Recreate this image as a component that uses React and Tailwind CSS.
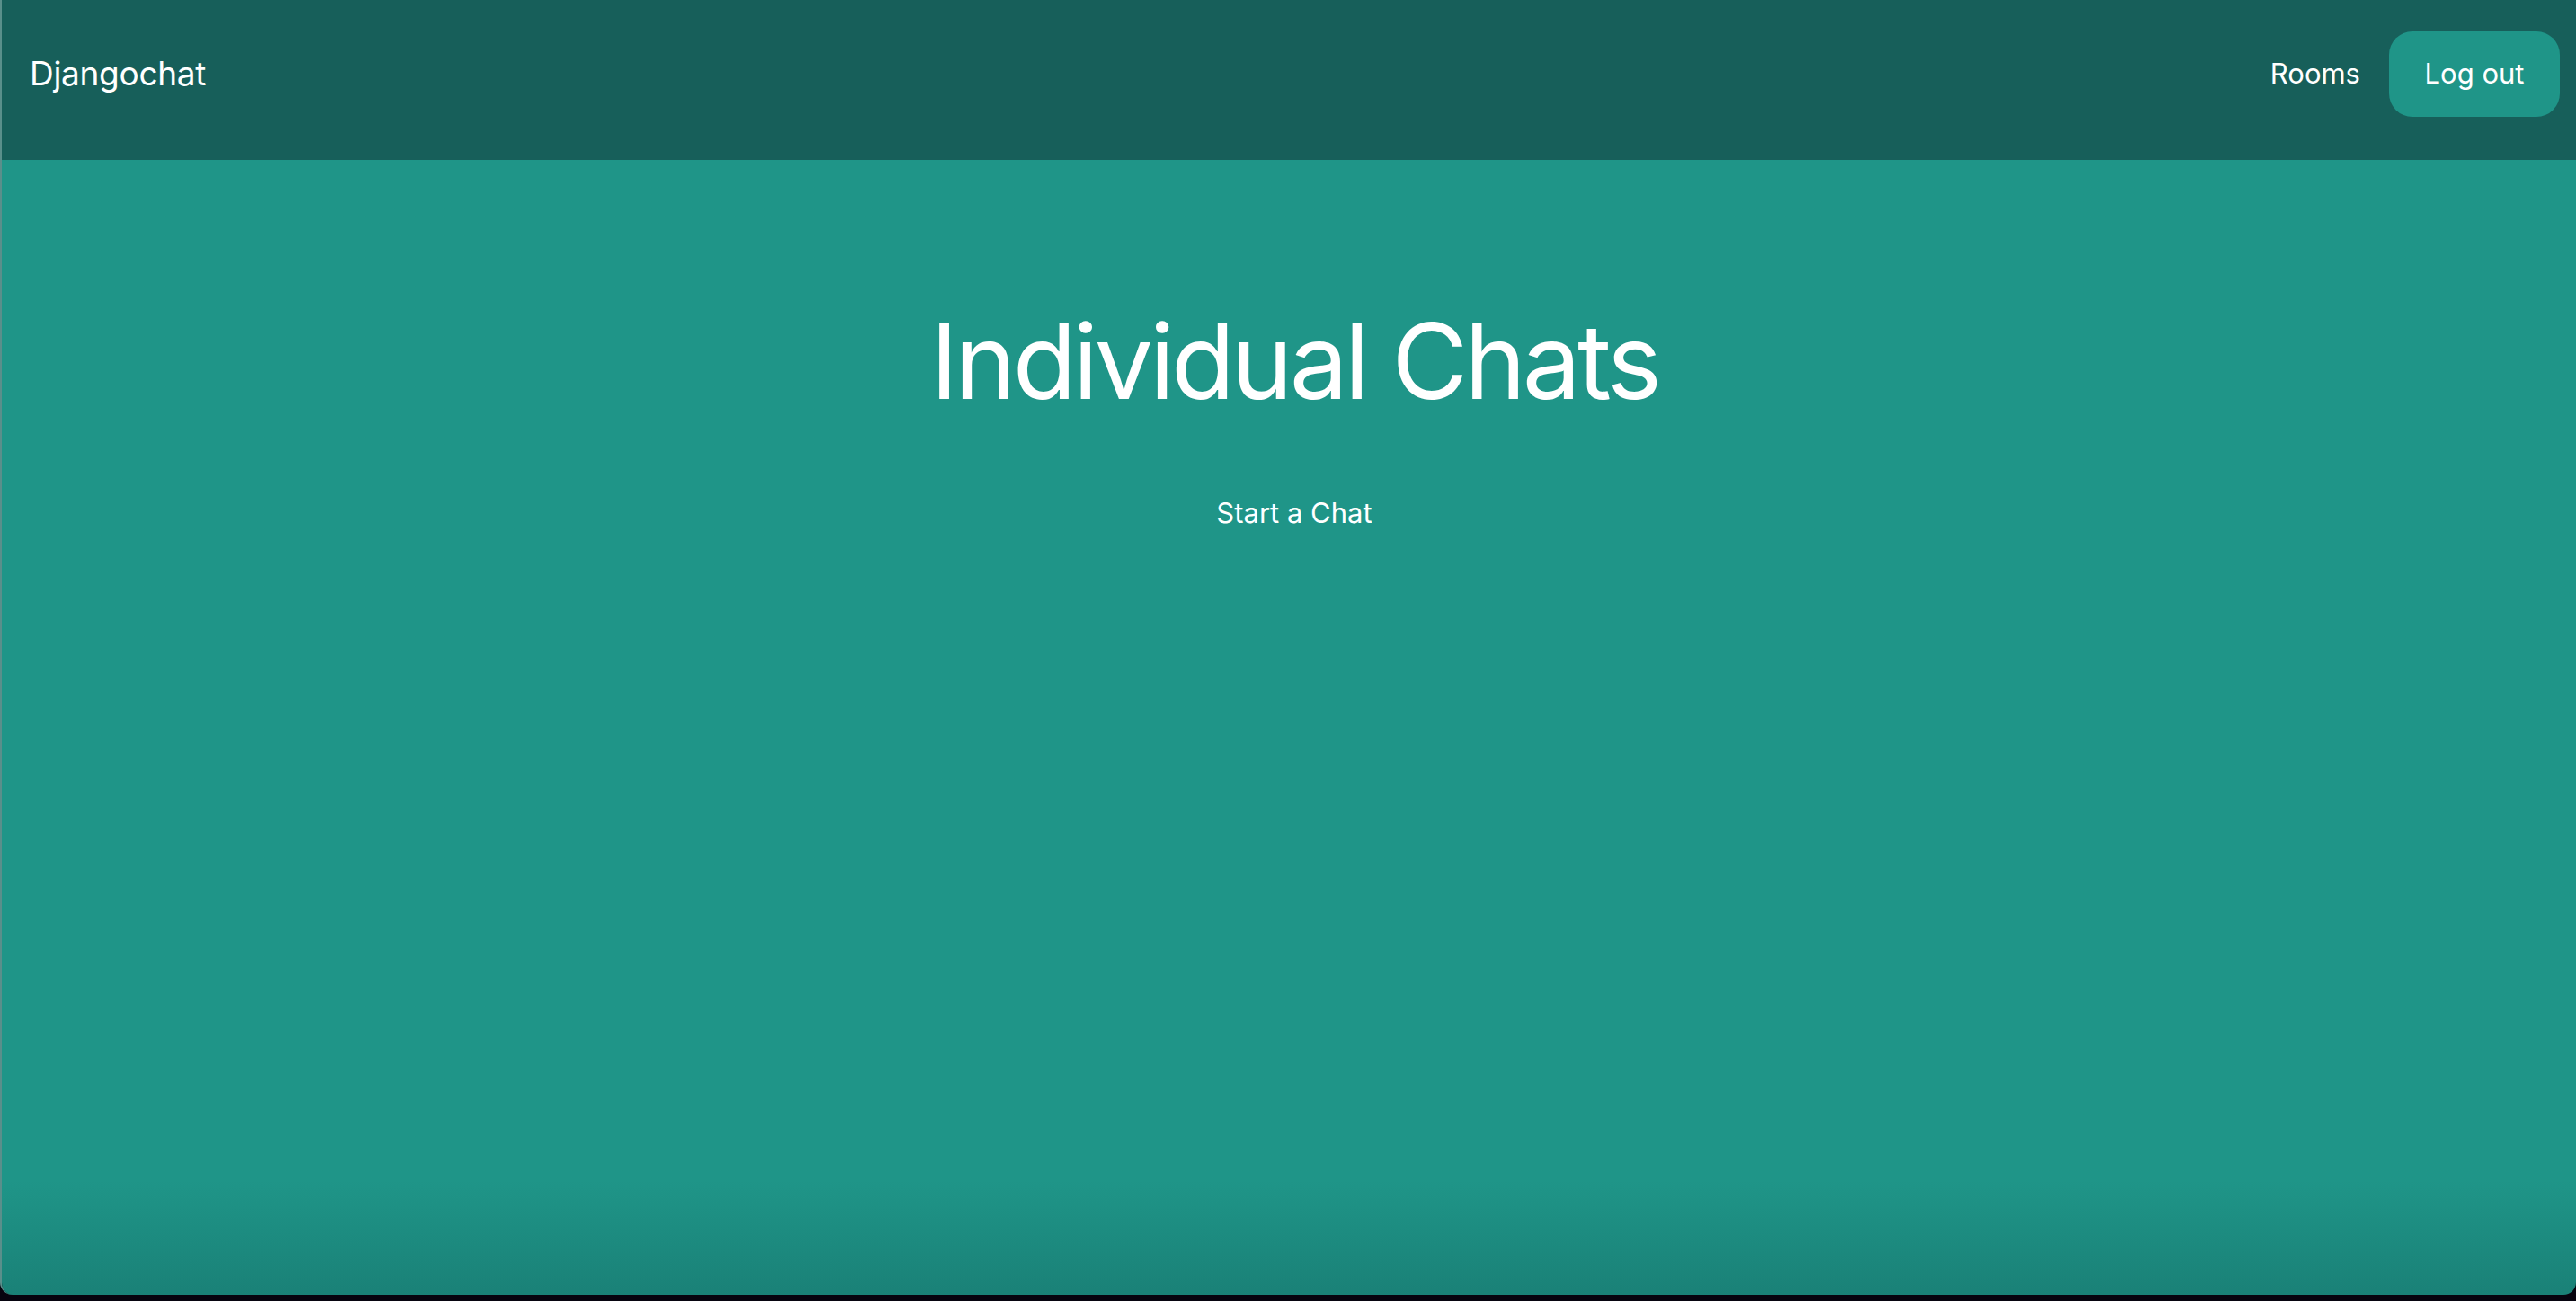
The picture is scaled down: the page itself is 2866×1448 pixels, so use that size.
import React from 'react';

export default function App() {
    return (
        <div className="w-full h-[1448px] bg-[#07040f] flex flex-col font-['Inter',sans-serif] select-none">
            <div className="h-[1441px] flex flex-col rounded-b-[14px] overflow-hidden border-l-2 border-[#5a8f8b]">
                {/* Navbar */}
                <nav className="h-[178px] bg-[#175f5a] flex items-center justify-between pl-[31px] pr-[18px]">
                    <a className="text-white text-[37px] tracking-[-0.3px] mb-[14px]">Djangochat</a>
                    <div className="flex items-center gap-[32px] mb-[14px]">
                        <a className="text-white text-[31px]">Rooms</a>
                        <button className="bg-[#1f9588] text-white text-[31px] w-[190px] h-[95px] rounded-[26px]">
                            Log out
                        </button>
                    </div>
                </nav>

                {/* Main */}
                <main className="flex-1 bg-linear-to-b from-[#1f9588] from-[90%] to-[#1a8177] flex flex-col items-center pl-[12px]">
                    <h1 className="text-white text-[116px] leading-none mt-[166px] tracking-[-4px]">Individual Chats</h1>
                    <a className="text-white text-[31px] mt-[88px]">Start a Chat</a>
                </main>
            </div>
        </div>
    );
}
